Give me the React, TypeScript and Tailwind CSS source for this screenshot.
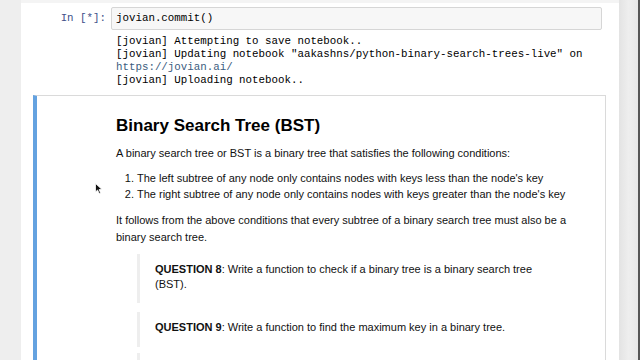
import React from "react";

export default function App() {
  const mono = { fontFamily: '"Liberation Mono", "Courier New", monospace' };
  const sans = { fontFamily: '"Liberation Sans", Arial, Helvetica, sans-serif' };
  return (
    <div className="w-[640px] h-[360px] overflow-hidden bg-[#eeeeee] flex">
      <div className="w-[21px] shrink-0 bg-[#eeeeee]" />
      <div className="w-[598px] shrink-0 bg-white flex flex-col border-t-[3px] border-[#f4f4f4]">
        {/* code cell */}
        <div className="flex pt-[4px]">
          <div className="w-[85px] shrink-0 text-right text-[10.8px] leading-[23px] text-[#404f89]" style={mono}>
            In&nbsp;[*]:
          </div>
          <div className="ml-[5px] w-[491px] h-[23px] bg-[#f7f7f7] border border-[#d6d6d6] rounded-[2px] pl-[4px] text-[10.8px] leading-[21px] text-black" style={mono}>
            jovian.commit()
          </div>
        </div>
        <div className="pl-[95px] pt-[5px] text-[10.8px] leading-[13px] text-black whitespace-pre" style={mono}>
          <div>[jovian] Attempting to save notebook..</div>
          <div>[jovian] Updating notebook "aakashns/python-binary-search-trees-live" on</div>
          <div className="text-[#3c5d80]">https://jovian.ai/</div>
          <div>[jovian] Uploading notebook..</div>
        </div>
        {/* markdown cell */}
        <div className="relative mt-[8px] ml-[12px] w-[573px] flex-1 border border-[#dadada] border-l-[4px] border-l-[#64a2e0] border-b-0 pl-[79px] pt-[17px] text-[#111]" style={sans}>
          <div className="text-[17px] leading-[26px] font-bold text-black">Binary Search Tree (BST)</div>
          <div className="mt-[6px] text-[11px] leading-[16px]">
            A binary search tree or BST is a binary tree that satisfies the following conditions:
          </div>
          <ol className="mt-[9px] text-[11px] leading-[16px] list-decimal pl-[21px]">
            <li>The left subtree of any node only contains nodes with keys less than the node's key</li>
            <li>The right subtree of any node only contains nodes with keys greater than the node's key</li>
          </ol>
          <div className="mt-[10px] text-[11px] leading-[17px]">
            It follows from the above conditions that every subtree of a binary search tree must also be a
            <br />
            binary search tree.
          </div>
          <div className="mt-[8px] ml-[21px] border-l-[3px] border-[#eeeeee] pl-[15px] pt-[8px] pb-[11px] text-[11px] leading-[15px]">
            <div>
              <b>QUESTION 8</b>: Write a function to check if a binary tree is a binary search tree
            </div>
            <div>(BST).</div>
          </div>
          <div className="mt-[9px] ml-[21px] border-l-[3px] border-[#eeeeee] pl-[15px] pt-[8px] pb-[12px] text-[11px] leading-[15px]">
            <div>
              <b>QUESTION 9</b>: Write a function to find the maximum key in a binary tree.
            </div>
          </div>
          <div className="mt-[6px] ml-[21px] h-[40px] border-l-[3px] border-[#eeeeee]" />
          {/* mouse cursor */}
          <svg className="absolute left-[58px] top-[87px]" width="8" height="11" viewBox="0 0 8 11">
            <path d="M0.5 0.5 L0.5 9 L2.6 7 L4.2 10.5 L5.6 9.9 L4.1 6.5 L7 6.5 Z" fill="#111" stroke="#fff" strokeWidth="0.8" />
          </svg>
        </div>
      </div>
      <div className="flex-1 bg-gradient-to-r from-[#e3e3e3] via-[#eeeeee] to-[#e6e6e6] border-r-[2px] border-[#555]" />
    </div>
  );
}
